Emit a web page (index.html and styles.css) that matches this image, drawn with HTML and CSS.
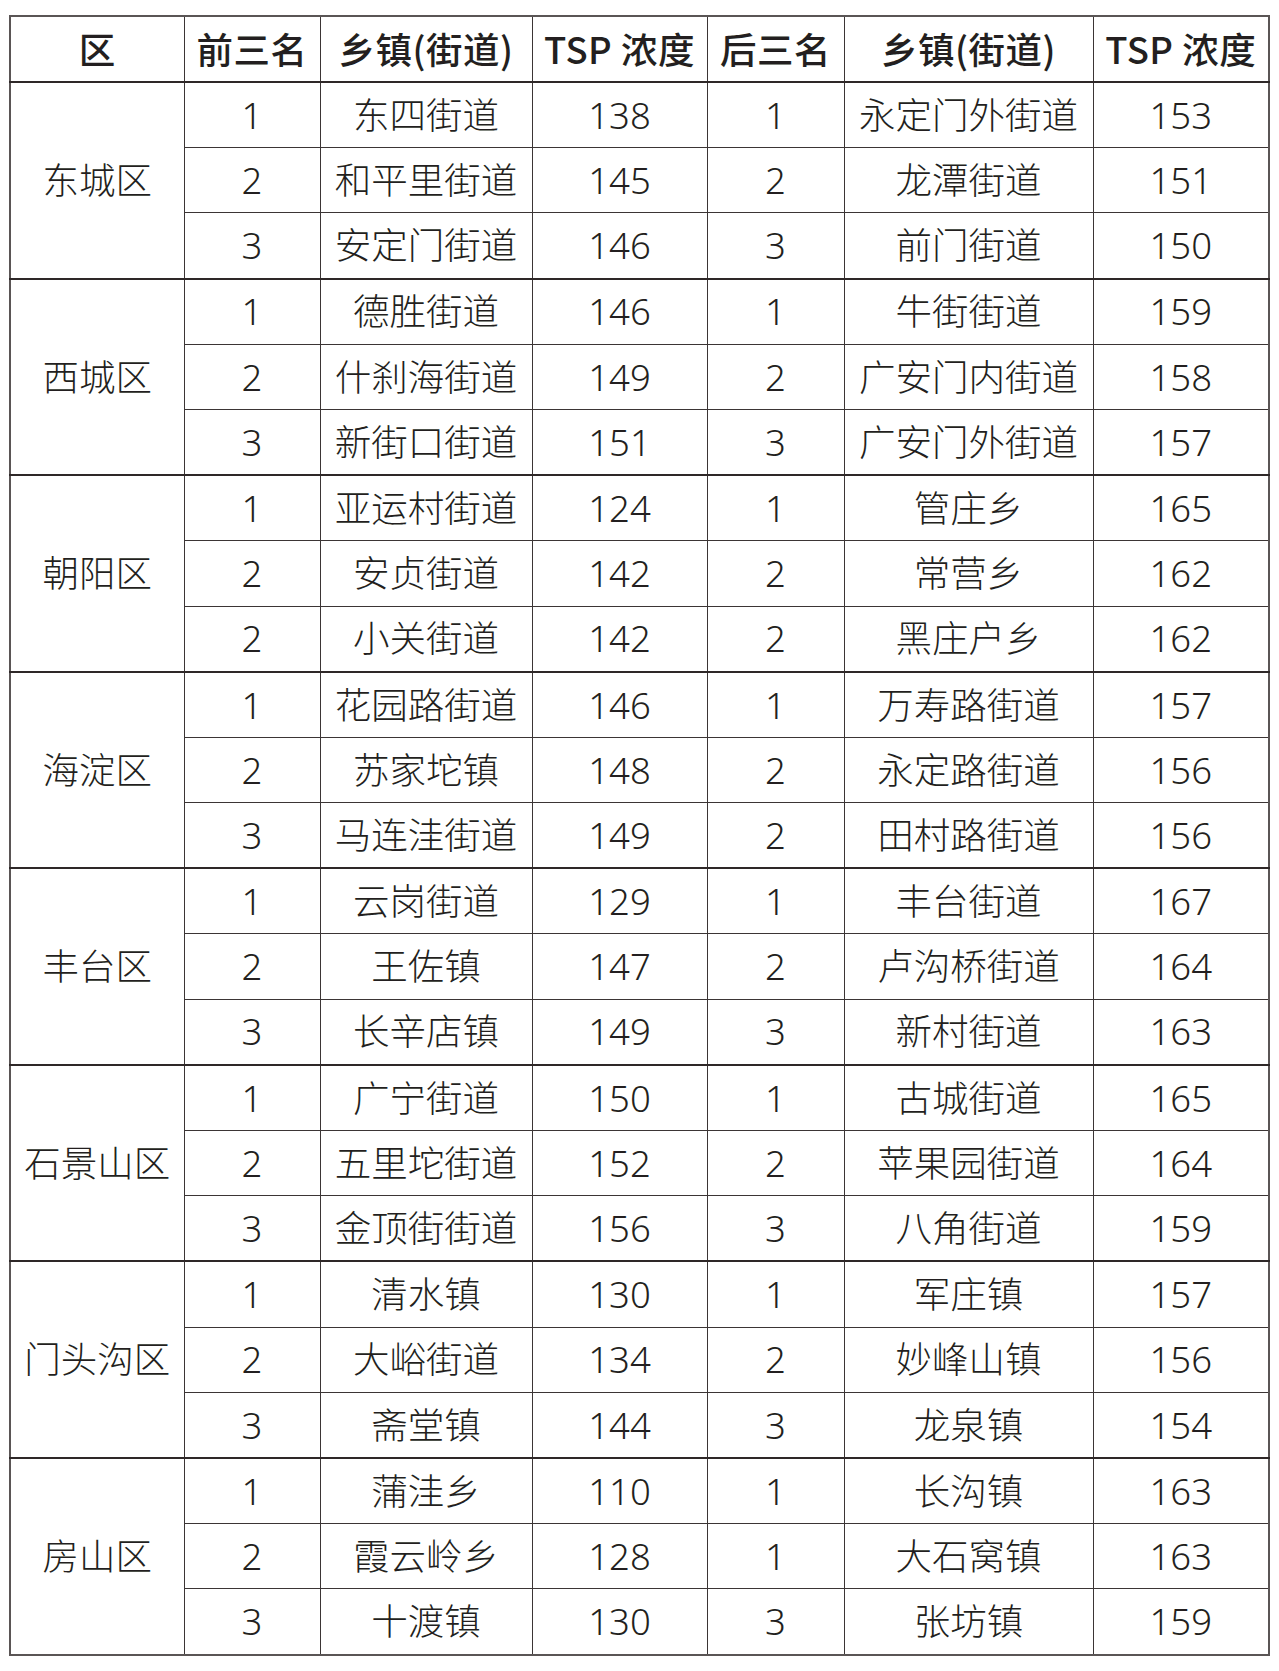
FILE: index.html
```html
<!DOCTYPE html>
<html lang="zh-CN">
<head>
<meta charset="utf-8">
<title>TSP 浓度</title>
<link rel="stylesheet" href="styles.css">
</head>
<body>
<table class="tsp">
<colgroup>
<col class="c1"><col class="c2"><col class="c3"><col class="c4"><col class="c5"><col class="c6"><col class="c7">
</colgroup>
<thead>
<tr><th>区</th><th>前三名</th><th>乡镇(街道)</th><th>TSP 浓度</th><th>后三名</th><th>乡镇(街道)</th><th>TSP 浓度</th></tr>
</thead>
<tbody>
<tr class="g"><td rowspan="3" class="d">东城区</td><td>1</td><td>东四街道</td><td>138</td><td>1</td><td>永定门外街道</td><td>153</td></tr>
<tr><td>2</td><td>和平里街道</td><td>145</td><td>2</td><td>龙潭街道</td><td>151</td></tr>
<tr><td>3</td><td>安定门街道</td><td>146</td><td>3</td><td>前门街道</td><td>150</td></tr>
<tr class="g"><td rowspan="3" class="d">西城区</td><td>1</td><td>德胜街道</td><td>146</td><td>1</td><td>牛街街道</td><td>159</td></tr>
<tr><td>2</td><td>什刹海街道</td><td>149</td><td>2</td><td>广安门内街道</td><td>158</td></tr>
<tr><td>3</td><td>新街口街道</td><td>151</td><td>3</td><td>广安门外街道</td><td>157</td></tr>
<tr class="g"><td rowspan="3" class="d">朝阳区</td><td>1</td><td>亚运村街道</td><td>124</td><td>1</td><td>管庄乡</td><td>165</td></tr>
<tr><td>2</td><td>安贞街道</td><td>142</td><td>2</td><td>常营乡</td><td>162</td></tr>
<tr><td>2</td><td>小关街道</td><td>142</td><td>2</td><td>黑庄户乡</td><td>162</td></tr>
<tr class="g"><td rowspan="3" class="d">海淀区</td><td>1</td><td>花园路街道</td><td>146</td><td>1</td><td>万寿路街道</td><td>157</td></tr>
<tr><td>2</td><td>苏家坨镇</td><td>148</td><td>2</td><td>永定路街道</td><td>156</td></tr>
<tr><td>3</td><td>马连洼街道</td><td>149</td><td>2</td><td>田村路街道</td><td>156</td></tr>
<tr class="g"><td rowspan="3" class="d">丰台区</td><td>1</td><td>云岗街道</td><td>129</td><td>1</td><td>丰台街道</td><td>167</td></tr>
<tr><td>2</td><td>王佐镇</td><td>147</td><td>2</td><td>卢沟桥街道</td><td>164</td></tr>
<tr><td>3</td><td>长辛店镇</td><td>149</td><td>3</td><td>新村街道</td><td>163</td></tr>
<tr class="g"><td rowspan="3" class="d">石景山区</td><td>1</td><td>广宁街道</td><td>150</td><td>1</td><td>古城街道</td><td>165</td></tr>
<tr><td>2</td><td>五里坨街道</td><td>152</td><td>2</td><td>苹果园街道</td><td>164</td></tr>
<tr><td>3</td><td>金顶街街道</td><td>156</td><td>3</td><td>八角街道</td><td>159</td></tr>
<tr class="g"><td rowspan="3" class="d">门头沟区</td><td>1</td><td>清水镇</td><td>130</td><td>1</td><td>军庄镇</td><td>157</td></tr>
<tr><td>2</td><td>大峪街道</td><td>134</td><td>2</td><td>妙峰山镇</td><td>156</td></tr>
<tr><td>3</td><td>斋堂镇</td><td>144</td><td>3</td><td>龙泉镇</td><td>154</td></tr>
<tr class="g"><td rowspan="3" class="d">房山区</td><td>1</td><td>蒲洼乡</td><td>110</td><td>1</td><td>长沟镇</td><td>163</td></tr>
<tr><td>2</td><td>霞云岭乡</td><td>128</td><td>1</td><td>大石窝镇</td><td>163</td></tr>
<tr><td>3</td><td>十渡镇</td><td>130</td><td>3</td><td>张坊镇</td><td>159</td></tr>
</tbody>
</table>
</body>
</html>
```

FILE: styles.css
```css
html, body {
  margin: 0;
  padding: 0;
  background: #ffffff;
}

.tsp {
  margin: 15px 0 0 9px;
  width: 1259px;
  table-layout: fixed;
  border-collapse: collapse;
  border: 2px solid #5a5555;
  color: #231f20;
}

.c1 { width: 174px; }
.c2 { width: 136px; }
.c3 { width: 212px; }
.c4 { width: 175px; }
.c5 { width: 137px; }
.c6 { width: 249px; }
.c7 { width: 176px; }

.tsp th,
.tsp td {
  border: 1.5px solid #3b3535;
  padding: 0;
  text-align: center;
  vertical-align: middle;
  white-space: nowrap;
  overflow: hidden;
}

.tsp th {
  height: 64px;
  font-family: "Noto Sans CJK SC", "Liberation Sans", sans-serif;
  font-weight: 500;
  font-size: 36.5px;
  letter-spacing: 0.5px;
  line-height: 1;
}

.tsp td {
  height: 64.2px;
  font-family: "Noto Sans", "Noto Sans CJK SC", sans-serif;
  font-weight: 300;
  font-size: 36.5px;
  line-height: 1;
}

.tsp tr.g td {
  border-top: 2px solid #2e2828;
}
```
